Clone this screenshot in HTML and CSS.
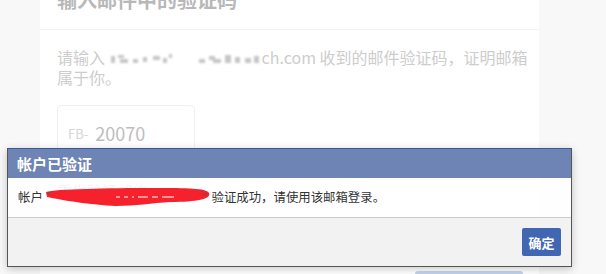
FILE: index.html
```html
<!doctype html>
<html lang="zh-CN">
    <head>
        <meta charset="utf-8">
        <link rel="stylesheet" href="styles.css">
    </head>
    <body>
        <!-- Tarjeta de verificación (queda detrás del diálogo) -->
        <div class="Tarjeta">
            <div class="Cabecera"><h2>输入邮件中的验证码</h2></div>
            <div class="Cuerpo">
                <p class="Texto">请输入 <svg class="Borroso" width="152" height="16" viewBox="0 0 152 16"><g fill="#c6c6c6"><rect x="2" y="6" width="4" height="7"/><rect x="9" y="5" width="6" height="3"/><rect x="11" y="9" width="8" height="4"/><rect x="24" y="9" width="5" height="4"/><rect x="34" y="7" width="4" height="5"/><rect x="44" y="6" width="7" height="4"/><rect x="54" y="8" width="4" height="5"/><rect x="60" y="4" width="3" height="4"/><rect x="90" y="9" width="6" height="4"/><rect x="100" y="6" width="6" height="4"/><rect x="104" y="9" width="8" height="4"/><rect x="116" y="5" width="6" height="8"/><rect x="126" y="7" width="5" height="6"/><rect x="136" y="8" width="6" height="5"/><rect x="145" y="6" width="5" height="7"/></g></svg>ch.com 收到的邮件验证码，证明邮箱属于你。</p>
                <div class="Codigo"><span class="Prefijo">FB-</span><span class="Numero">20070</span></div>
                <a class="Reenviar">重发验证邮件</a>
            </div>
            <div class="Pie"><span class="Boton"></span></div>
        </div>

        <!-- Diálogo modal -->
        <div class="Dialogo">
            <div class="DialogoTitulo">帐户已验证</div>
            <div class="DialogoCuerpo">帐户 <span class="Tachado"><svg width="166" height="20" viewBox="0 0 166 20"><path d="M0,5 C10,2 60,1 110,1 C140,1 160,1 163,6 C166,12 150,15 125,15 C105,16 90,19 70,19 C45,18 15,13 1,10 Z" fill="#f5222d"/><path d="M70,10 L74,10 M78,10 L82,10 M86,10 L88,10 M92,10 L102,10 M106,10 L112,10 M116,10 L128,10" stroke="#fff" stroke-width="1.2"/><path d="M1,6 L4,6 M157,7 L161,7" stroke="#555" stroke-width="1"/></svg></span>验证成功，请使用该邮箱登录。</div>
            <div class="DialogoPie"><button class="Confirmar">确定</button></div>
        </div>
    </body>
</html>
```

FILE: styles.css
```css
body        { margin:0; background:#f8f8f8; font-family:"Noto Sans CJK SC", "Liberation Sans", sans-serif; overflow:hidden; height:274px; }
h2, p       { margin:0; }

/* Tarjeta del fondo, ya apagada por el modal */
.Tarjeta {
    margin-left:40px;
    width:499px;
    background:#fff;
    min-height:320px;
}
.Cabecera {
    padding:0 17px 19px;
    border-bottom:1px solid #f2f2f2;
}
.Cabecera h2 {
    margin-top:-10px;
    font-size:20px;
    line-height:20px;
    color:#b8b8b8;
}
.Cuerpo                 { padding:17px 8px 0 17px; }
.Texto                  { font-size:16px; line-height:20px; color:#cdcdcd; }
/* Correo borroso (manchas grises) */
.Borroso                { vertical-align:-2px; filter:blur(1px); margin-right:1px; }
.Codigo {
    margin-top:18px;
    width:138px;
    height:56px;
    border:1px solid #f0f0f0;
    border-radius:4px;
    display:flex;
    align-items:center;
    padding-left:10px;
    box-sizing:border-box;
}
.Prefijo                { font-size:13px; color:#d6d6d6; margin-right:7px; }
.Numero                 { font-size:18px; color:#bdbdbd; }
.Reenviar               { display:block; margin-top:20px; font-size:15px; line-height:20px; color:#8fb0e4; }
.Pie                    { display:flex; justify-content:flex-end; padding:70px 16px 0; }
.Boton                  { width:108px; height:36px; background:#c5d4ec; border-radius:3px; }

/* Diálogo: está encima de todo */
.Dialogo {
    position:absolute;
    left:7px;
    top:148px;
    width:565px;
    box-sizing:border-box;
    border:1px solid #555;
    border-top:1px solid #3b5998;
    box-shadow:0 2px 8px rgba(0,0,0,0.22);
}
.DialogoTitulo {
    height:29px;
    line-height:29px;
    padding-left:9px;
    background:#6d84b4;
    color:#fff;
    font-size:15px;
    font-weight:bold;
}
.DialogoCuerpo {
    height:39px;
    line-height:39px;
    padding-left:10px;
    background:rgba(255,255,255,0.86);
    border-bottom:1px solid #ccc;
    font-size:12.4px;
    color:#333;
}
.Tachado                { display:inline-block; vertical-align:middle; margin:-4px 0 0 0; line-height:0; }
.DialogoPie {
    height:48px;
    background:#f2f2f2;
    display:flex;
    justify-content:flex-end;
    align-items:center;
    padding-right:10px;
}
.Confirmar {
    width:39px;
    height:28px;
    border:0;
    border-radius:2px;
    background:#4267b2;
    color:#fff;
    font-family:inherit;
    font-size:13px;
    font-weight:bold;
    padding:0;
}
```
